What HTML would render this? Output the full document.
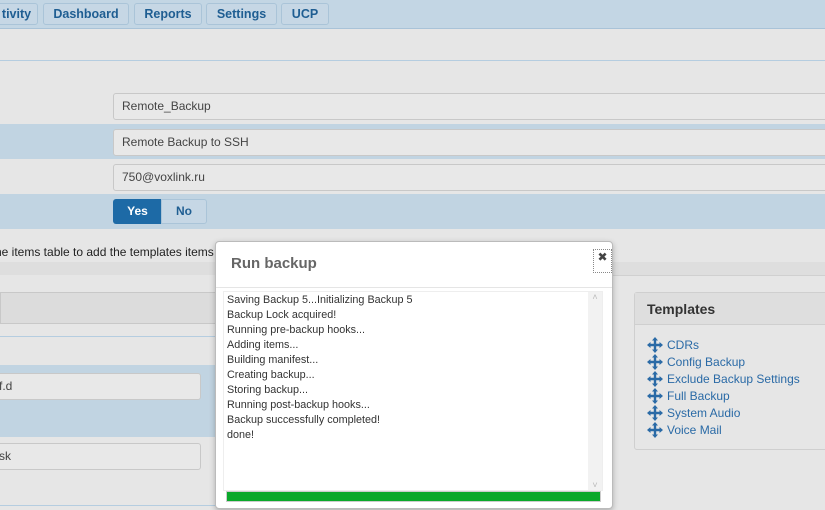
<!DOCTYPE html>
<html><head><style>
*{box-sizing:border-box;margin:0;padding:0}
body{width:825px;height:510px;overflow:hidden;background:#e6e6e6;font-family:"Liberation Sans","DejaVu Sans",sans-serif;position:relative;font-size:12px;color:#333}
.a{position:absolute}
.tab{position:absolute;top:3px;height:22px;background:#c6d7e5;border:1px solid #aac4d8;border-radius:3px;color:#1f5e92;font-weight:bold;font-size:12.5px;text-align:center;line-height:20px}
.inp{position:absolute;background:#e8e8e8;border:1px solid #c8c8c8;border-radius:3px;font-size:12px;color:#444;padding-left:8px;line-height:25px}
.log div{height:15px;line-height:15px;font-size:10.8px;color:#333}
.tp div{height:17px;line-height:17px;font-size:12px;color:#2a6aa6;padding-left:32px;position:relative}
.tp svg{position:absolute;left:12px;top:0}
</style></head><body>
<div class="a" style="left:0;top:0;width:825px;height:29px;background:#c3d6e4;border-bottom:1px solid #a9c3d8"></div>
<div class="tab" style="left:-5px;width:43px">tivity</div>
<div class="tab" style="left:43px;width:86px">Dashboard</div>
<div class="tab" style="left:134px;width:68px">Reports</div>
<div class="tab" style="left:206px;width:71px">Settings</div>
<div class="tab" style="left:281px;width:48px">UCP</div>
<div class="a" style="left:0;top:60px;width:825px;height:1px;background:#b5cde0"></div>
<div class="a" style="left:0;top:124px;width:825px;height:35px;background:#c1d4e2"></div>
<div class="a" style="left:0;top:194px;width:825px;height:35px;background:#c1d4e2"></div>
<div class="inp" style="left:113px;top:93px;width:720px;height:27px">Remote_Backup</div>
<div class="inp" style="left:113px;top:129px;width:720px;height:27px">Remote Backup to SSH</div>
<div class="inp" style="left:113px;top:164px;width:720px;height:27px">750@voxlink.ru</div>
<div class="a" style="left:113px;top:199px;width:49px;height:25px;background:#1d6aa6;border-radius:3px 0 0 3px;color:#fff;font-weight:bold;text-align:center;line-height:25px">Yes</div>
<div class="a" style="left:161px;top:199px;width:46px;height:25px;background:#c6d7e5;border:1px solid #aac4d8;border-radius:0 3px 3px 0;color:#1f5e92;font-weight:bold;text-align:center;line-height:23px">No</div>
<div class="a" style="left:-5px;top:245px;font-size:12px;color:#222">he items table to add the templates items</div>
<div class="a" style="left:0;top:262px;width:825px;height:13px;background:#dedede"></div>
<div class="a" style="left:0;top:292px;width:220px;height:32px;background:#dcdcdc;border:1px solid #c8c8c8"></div>
<div class="a" style="left:0;top:336px;width:220px;height:1px;background:#b5cde0"></div>
<div class="a" style="left:0;top:365px;width:220px;height:72px;background:#c1d4e2"></div>
<div class="inp" style="left:-10px;top:373px;width:211px;height:27px">f.d</div>
<div class="inp" style="left:-10px;top:443px;width:211px;height:27px">sk</div>
<div class="a" style="left:0;top:505px;width:220px;height:1px;background:#b5cde0"></div>
<div class="a" style="left:612px;top:275px;width:213px;height:1px;background:#d0d0d0"></div>
<div class="a" style="left:634px;top:292px;width:200px;height:158px;border:1px solid #cfcfcf;border-radius:3px;background:#e6e6e6">
<div style="height:32px;background:#dedede;border-bottom:1px solid #cfcfcf;font-weight:bold;font-size:14px;color:#333;padding:8px 0 0 12px">Templates</div>
<div class="tp" style="padding-top:12px">
<div><svg width="16" height="16" viewBox="0 0 16 16"><path d="M8 0L5 3.5H6.8V6.8H3.5V5L0 8L3.5 11V9.2H6.8V12.5H5L8 16L11 12.5H9.2V9.2H12.5V11L16 8L12.5 5V6.8H9.2V3.5H11Z" fill="#2a6aa6"/></svg>CDRs</div>
<div><svg width="16" height="16" viewBox="0 0 16 16"><path d="M8 0L5 3.5H6.8V6.8H3.5V5L0 8L3.5 11V9.2H6.8V12.5H5L8 16L11 12.5H9.2V9.2H12.5V11L16 8L12.5 5V6.8H9.2V3.5H11Z" fill="#2a6aa6"/></svg>Config Backup</div>
<div><svg width="16" height="16" viewBox="0 0 16 16"><path d="M8 0L5 3.5H6.8V6.8H3.5V5L0 8L3.5 11V9.2H6.8V12.5H5L8 16L11 12.5H9.2V9.2H12.5V11L16 8L12.5 5V6.8H9.2V3.5H11Z" fill="#2a6aa6"/></svg>Exclude Backup Settings</div>
<div><svg width="16" height="16" viewBox="0 0 16 16"><path d="M8 0L5 3.5H6.8V6.8H3.5V5L0 8L3.5 11V9.2H6.8V12.5H5L8 16L11 12.5H9.2V9.2H12.5V11L16 8L12.5 5V6.8H9.2V3.5H11Z" fill="#2a6aa6"/></svg>Full Backup</div>
<div><svg width="16" height="16" viewBox="0 0 16 16"><path d="M8 0L5 3.5H6.8V6.8H3.5V5L0 8L3.5 11V9.2H6.8V12.5H5L8 16L11 12.5H9.2V9.2H12.5V11L16 8L12.5 5V6.8H9.2V3.5H11Z" fill="#2a6aa6"/></svg>System Audio</div>
<div><svg width="16" height="16" viewBox="0 0 16 16"><path d="M8 0L5 3.5H6.8V6.8H3.5V5L0 8L3.5 11V9.2H6.8V12.5H5L8 16L11 12.5H9.2V9.2H12.5V11L16 8L12.5 5V6.8H9.2V3.5H11Z" fill="#2a6aa6"/></svg>Voice Mail</div>
</div></div>
<div class="a" style="left:215px;top:241px;width:398px;height:268px;background:#fff;border:1px solid #bbb;border-radius:4px;box-shadow:0 2px 6px rgba(0,0,0,.25)">
<div class="a" style="left:15px;top:13px;font-size:15px;font-weight:bold;color:#666">Run backup</div>
<div class="a" style="left:377px;top:7px;width:19px;height:24px;border:1px dotted #888;font-size:12px;font-weight:bold;color:#444;text-align:center;line-height:14px">✖</div>
<div class="a" style="left:0;top:45px;width:396px;height:1px;background:#e5e5e5"></div>
<div class="a log" style="left:7px;top:49px;width:380px;height:200px;border:1px solid #eee;padding:1px 0 0 3px">
<div>Saving Backup 5...Initializing Backup 5</div><div>Backup Lock acquired!</div><div>Running pre-backup hooks...</div><div>Adding items...</div><div>Building manifest...</div><div>Creating backup...</div><div>Storing backup...</div><div>Running post-backup hooks...</div><div>Backup successfully completed!</div><div>done!</div>
</div>
<div class="a" style="left:372px;top:50px;width:14px;height:198px;background:#f2f2f2;color:#bbb;font-size:9px;text-align:center">˄<div style="position:absolute;bottom:0;width:14px">˅</div></div>
<div class="a" style="left:10px;top:249px;width:375px;height:11px;background:#ddd;border:1px solid #ccc"><div style="height:9px;background:#0aa82a"></div></div>
</div>
</body></html>
